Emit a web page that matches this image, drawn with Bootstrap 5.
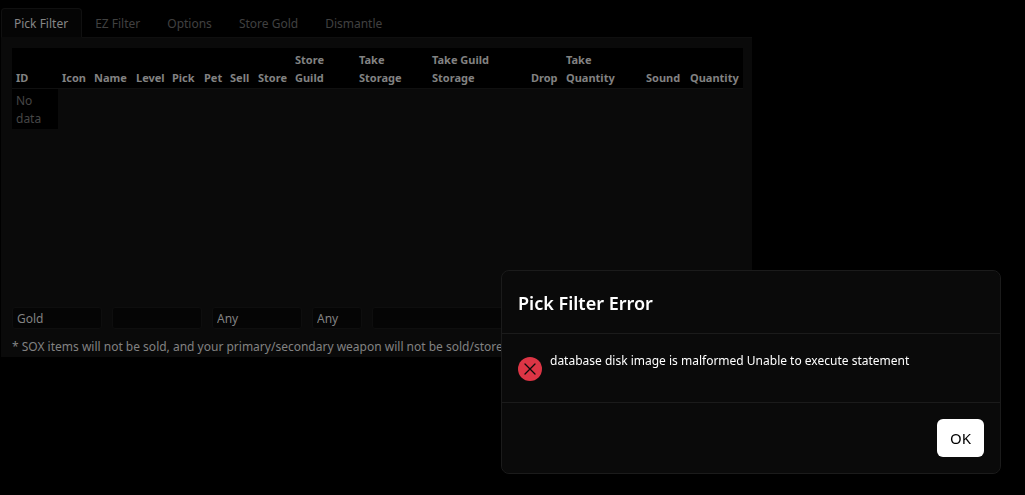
<!DOCTYPE html>
<html lang="en" data-bs-theme="dark">
<head>
<meta charset="utf-8">
<meta name="viewport" content="width=device-width, initial-scale=1">
<title>Pick Filter</title>
<link href="https://cdn.jsdelivr.net/npm/bootstrap@5.3.0/dist/css/bootstrap.min.css" rel="stylesheet">
<style>
  body { background: #000; color: #828282; font-family: "Noto Sans", "Open Sans", sans-serif; font-size: 12px; line-height: 18px; }
  .filter-window { max-width: 752px; padding: 8px 0 0 1px; }
  .nav-tabs { --bs-nav-tabs-border-color: #0f0f0f; --bs-nav-tabs-border-radius: 4px; }
  .nav-tabs .nav-link { padding: 6px 13px 4px 12px; line-height: 18px; color: #404040; }
  .nav-tabs .nav-link.active { color: #868686; background: #050505; border-color: #101010 #101010 #0a0a0a; }
  .filter-panel { background: #0a0a0a; padding: 10px 9px 1px 11px; }
  .item-area { height: 251px; }
  .item-table { table-layout: fixed; width: 100%; }
  .item-table th, .item-table td { padding: 3px 4px 1px; }
  .item-table th { background: #000; vertical-align: bottom; color: #828282; border-bottom: 1px solid #101010; font-weight: 700; font-size: 11px; }
  .item-table td { background: #000; color: #464646; }
  .filter-row { gap: 10px; }
  .filter-row .form-control, .filter-row .form-select {
    height: 22px; padding: 2px 4px 0; line-height: 18px; font-size: 12px; color: #828282;
    background: #050505; border-color: #0e0e0e; border-radius: 3px; }
  .filter-row .field-wide { width: 90px; }
  .filter-row .field-narrow { width: 50px; }
  .filter-note { padding-top: 9px; }
  .error-dialog { position: fixed; inset: auto 24px 21px auto; width: 500px; max-width: 100%; height: auto; overflow: visible;
    --bs-modal-bg: #0a0a0a; --bs-modal-color: #fff; --bs-modal-border-color: #1b1b1b;
    --bs-modal-header-border-color: #1b1b1b; --bs-modal-footer-border-color: #1b1b1b; }
  .error-dialog .modal-title { font-size: 18px; line-height: 30px; padding-top: 1px; margin-bottom: -1px; font-weight: 600; }
  .error-dialog .modal-body { min-height: 68px; }
  .error-icon { margin-top: 7px; }
  .error-text { padding-top: 2px; }
  .btn-ok { --bs-btn-font-size: 15px; --bs-btn-line-height: 24px; --bs-btn-bg: #fff; --bs-btn-color: #000; }
</style>
</head>
<body>
<main class="filter-window">
  <ul class="nav nav-tabs">
    <li class="nav-item"><a class="nav-link active" aria-current="page" href="#pick">Pick Filter</a></li>
    <li class="nav-item"><a class="nav-link" href="#ez">EZ Filter</a></li>
    <li class="nav-item"><a class="nav-link" href="#options">Options</a></li>
    <li class="nav-item"><a class="nav-link" href="#gold">Store Gold</a></li>
    <li class="nav-item"><a class="nav-link" href="#dismantle">Dismantle</a></li>
  </ul>
  <section class="filter-panel" id="pick">
    <div class="item-area">
      <table class="item-table">
        <colgroup>
          <col style="width:46px"><col style="width:32px"><col style="width:42px"><col style="width:36px"><col style="width:32px">
          <col style="width:26px"><col style="width:28px"><col style="width:37px"><col style="width:64px"><col style="width:73px">
          <col style="width:99px"><col style="width:35px"><col style="width:80px"><col style="width:44px"><col style="width:57px">
        </colgroup>
        <thead>
          <tr><th>ID</th><th>Icon</th><th>Name</th><th>Level</th><th>Pick</th><th>Pet</th><th>Sell</th><th>Store</th><th>Store<br>Guild</th><th>Take<br>Storage</th><th>Take Guild<br>Storage</th><th>Drop</th><th>Take<br>Quantity</th><th>Sound</th><th>Quantity</th></tr>
        </thead>
        <tbody><tr><td>No<br>data</td></tr></tbody>
      </table>
    </div>
    <div class="filter-row d-flex align-items-center mt-2">
      <select class="form-select field-wide" aria-label="Item type"><option>Gold</option></select>
      <input class="form-control field-wide" type="text" aria-label="Item name">
      <select class="form-select field-wide" aria-label="Race"><option>Any</option></select>
      <select class="form-select field-narrow" aria-label="Gender"><option>Any</option></select>
      <input class="form-control field-wide flex-grow-1" type="text" aria-label="Search">
    </div>
    <p class="filter-note mb-0">* SOX items will not be sold, and your primary/secondary weapon will not be sold/stored.</p>
  </section>
</main>

<div class="modal d-block error-dialog" role="alertdialog" aria-labelledby="errorTitle" aria-describedby="errorText">
  <div class="modal-content">
    <div class="modal-header"><h1 class="modal-title" id="errorTitle">Pick Filter Error</h1></div>
    <div class="modal-body d-flex align-items-start gap-2">
      <svg class="error-icon flex-shrink-0" width="24" height="24" viewBox="0 0 24 24" aria-hidden="true">
        <circle cx="12" cy="12" r="12" fill="#dc3545"/>
        <path d="M7 7l10 10M17 7L7 17" stroke="#0a0a0a" stroke-width="1.3" stroke-linecap="round"/>
      </svg>
      <span class="error-text" id="errorText">database disk image is malformed Unable to execute statement</span>
    </div>
    <div class="modal-footer"><button type="button" class="btn btn-ok">OK</button></div>
  </div>
</div>
<script src="https://cdn.jsdelivr.net/npm/bootstrap@5.3.0/dist/js/bootstrap.bundle.min.js"></script>
</body>
</html>
